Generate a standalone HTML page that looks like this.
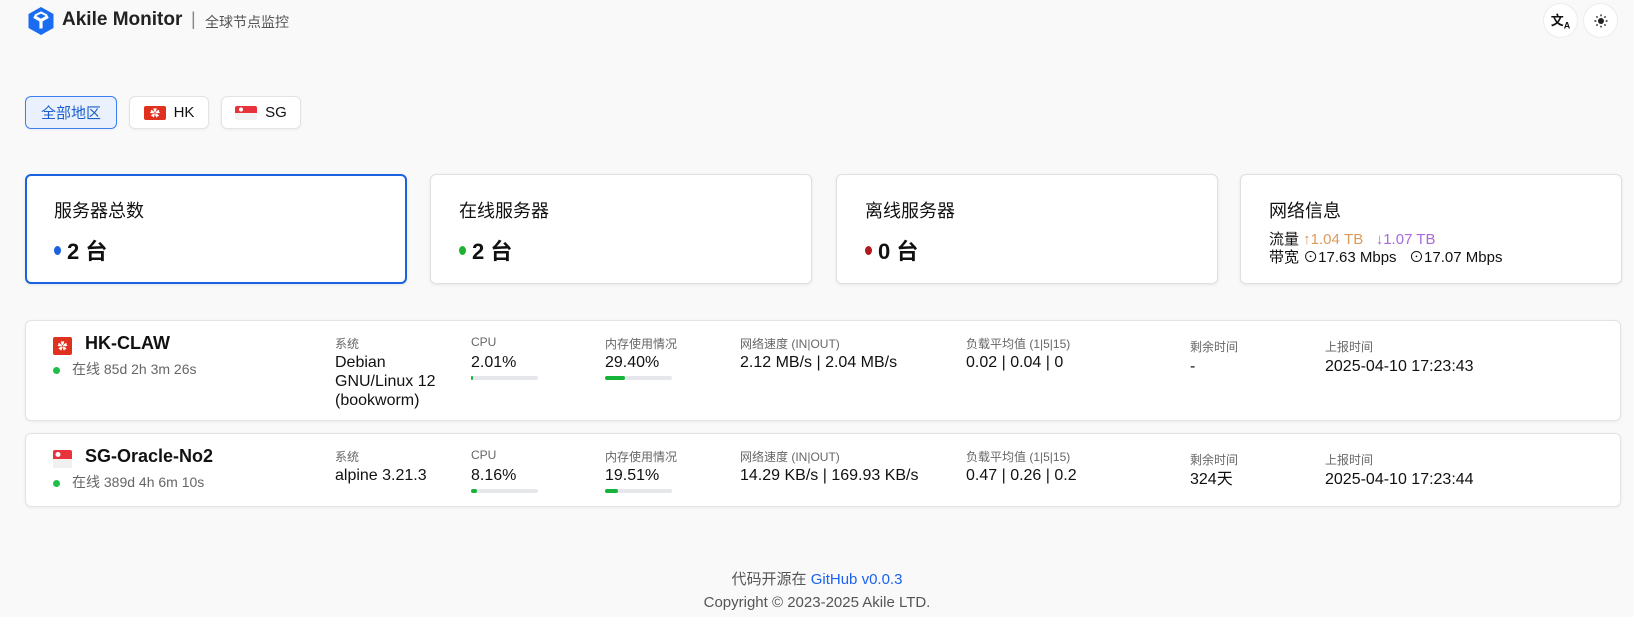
<!DOCTYPE html>
<html><head><meta charset="utf-8"><style>
*{margin:0;padding:0;box-sizing:border-box}
body{width:1634px;height:617px;background:#f9f9f9;font-family:"Liberation Sans","Noto Sans CJK SC",sans-serif;color:#111;position:relative;overflow:hidden}
.a{position:absolute;white-space:nowrap}
.btn{position:absolute;top:96px;height:33px;background:#fff;border:1px solid #e3e3e3;border-radius:6px;font-size:15px;display:flex;align-items:center;justify-content:center;gap:8px;box-shadow:0 1px 2px rgba(0,0,0,.05)}
.card{position:absolute;top:174px;height:110px;width:382px;background:#fff;border:1px solid #e0e0e0;border-radius:6px;box-shadow:0 1px 3px rgba(0,0,0,.08)}
.card .t{position:absolute;left:28px;top:22px;font-size:18px}
.card .v{position:absolute;left:28px;top:59px;font-size:22px;font-weight:bold;display:flex;align-items:center;gap:6px}
.dot{width:7px;height:9px;border-radius:50%;display:inline-block}
.row{position:absolute;left:25px;width:1596px;background:#fff;border:1px solid #e3e3e3;border-radius:6px;box-shadow:0 1px 3px rgba(0,0,0,.06)}
.lb{position:absolute;font-size:12px;color:#666}
.vl{position:absolute;font-size:16px;line-height:19px}
.bar{position:absolute;width:67px;height:4px;background:#e5e7eb;border-radius:2px}
.bar i{display:block;height:4px;background:#16b33a;border-radius:2px}
.circ{position:absolute;top:3px;width:35px;height:35px;border-radius:50%;background:#fff;border:1px solid #ececec;display:flex;align-items:center;justify-content:center}
</style></head><body>
<svg class="a" style="left:27px;top:6px" width="28" height="30" viewBox="0 0 28 30"><path d="M14 1 L26.5 8 V22 L14 29 L1.5 22 V8 Z" fill="#1a6cf0"/><path d="M7 10.5 L14 14.5 L21 10.5 M14 14.5 V22.5" stroke="#fff" stroke-width="3.2" fill="none" stroke-linejoin="round"/><path d="M8 9.5 L14 6.5 L20 9.5" stroke="#fff" stroke-width="2" fill="none"/></svg>
<div class="a" style="left:62px;top:9px;font-size:19px;font-weight:bold;color:#222">Akile Monitor</div>
<div class="a" style="left:191px;top:9px;font-size:18px;color:#888">|</div>
<div class="a" style="left:205px;top:12px;font-size:14px;color:#555">全球节点监控</div>
<div class="circ" style="left:1543px"><span style="font-size:13px;font-weight:bold">文<sub style="font-size:9px">A</sub></span></div>
<div class="circ" style="left:1583px"><svg width="14" height="14" viewBox="0 0 14 14"><circle cx="7" cy="7" r="3" fill="#222"/><g stroke="#222" stroke-width="1.4"><path d="M7 0.5v1.8M7 11.7v1.8M0.5 7h1.8M11.7 7h1.8M2.4 2.4l1.2 1.2M10.4 10.4l1.2 1.2M2.4 11.6l1.2-1.2M10.4 3.6l1.2-1.2"/></g></svg></div>

<div class="btn" style="left:25px;width:92px;background:#eaf1fc;border-color:#3b7ff0;color:#1a5fd0">全部地区</div>
<div class="btn" style="left:129px;width:80px"><svg width="22" height="14"><rect width="22" height="14" rx="2" fill="#e0301e"/><text x="11" y="11" fill="#fff" font-size="10" text-anchor="middle">✿</text></svg>HK</div>
<div class="btn" style="left:221px;width:80px"><svg width="22" height="14"><rect width="22" height="14" rx="2" fill="#f2f2f2"/><path d="M2 0h18a2 2 0 0 1 2 2v5H0V2a2 2 0 0 1 2-2z" fill="#e8323c"/><circle cx="6" cy="3.5" r="2" fill="#fff"/></svg>SG</div>

<div class="card" style="left:25px;border:2px solid #1a62e0"><div class="t" style="left:27px;top:21px">服务器总数</div><div class="v" style="left:27px;top:58px"><span class="dot" style="background:#1a62e0"></span>2 台</div></div>
<div class="card" style="left:430px"><div class="t">在线服务器</div><div class="v"><span class="dot" style="background:#1fb030"></span>2 台</div></div>
<div class="card" style="left:836px"><div class="t">离线服务器</div><div class="v"><span class="dot" style="background:#b01a1a"></span>0 台</div></div>
<div class="card" style="left:1240px"><div class="t">网络信息</div>
<div class="a" style="left:28px;top:56px;font-size:15px;line-height:18px">流量 <span style="color:#d99a5c">↑1.04 TB</span> &nbsp; <span style="color:#a86ad8">↓1.07 TB</span><br>带宽 ⊙17.63 Mbps &nbsp; ⊙17.07 Mbps</div></div>

<div class="row" style="top:320px;height:101px">
<svg class="a" style="left:27px;top:16px" width="19" height="18"><rect width="19" height="18" rx="2" fill="#e0301e"/><text x="9.5" y="13" fill="#fff" font-size="10" text-anchor="middle">✿</text></svg>
<div class="a" style="left:59px;top:12px;font-size:18px;font-weight:bold">HK-CLAW</div>
<div class="a" style="left:27px;top:38px;font-size:14px;color:#666"><span class="dot" style="background:#1fbf4a;width:7px;height:7px;margin-right:12px"></span>在线 85d 2h 3m 26s</div>
<div class="lb" style="left:309px;top:14px">系统</div><div class="vl" style="left:309px;top:32px">Debian<br>GNU/Linux 12<br>(bookworm)</div>
<div class="lb" style="left:445px;top:14px">CPU</div><div class="vl" style="left:445px;top:32px">2.01%</div><div class="bar" style="left:445px;top:55px"><i style="width:2px"></i></div>
<div class="lb" style="left:579px;top:14px">内存使用情况</div><div class="vl" style="left:579px;top:32px">29.40%</div><div class="bar" style="left:579px;top:55px"><i style="width:20px"></i></div>
<div class="lb" style="left:714px;top:14px">网络速度 (IN|OUT)</div><div class="vl" style="left:714px;top:32px">2.12 MB/s | 2.04 MB/s</div>
<div class="lb" style="left:940px;top:14px">负载平均值 (1|5|15)</div><div class="vl" style="left:940px;top:32px">0.02 | 0.04 | 0</div>
<div class="lb" style="left:1164px;top:17px">剩余时间</div><div class="vl" style="left:1164px;top:36px">-</div>
<div class="lb" style="left:1299px;top:17px">上报时间</div><div class="vl" style="left:1299px;top:36px">2025-04-10 17:23:43</div>
</div>

<div class="row" style="top:433px;height:74px">
<svg class="a" style="left:27px;top:16px" width="19" height="18"><rect width="19" height="18" rx="2" fill="#f0f0f0"/><path d="M2 0h15a2 2 0 0 1 2 2v7H0V2a2 2 0 0 1 2-2z" fill="#e8323c"/><circle cx="5" cy="4.5" r="2.5" fill="#fff"/></svg>
<div class="a" style="left:59px;top:12px;font-size:18px;font-weight:bold">SG-Oracle-No2</div>
<div class="a" style="left:27px;top:38px;font-size:14px;color:#666"><span class="dot" style="background:#1fbf4a;width:7px;height:7px;margin-right:12px"></span>在线 389d 4h 6m 10s</div>
<div class="lb" style="left:309px;top:14px">系统</div><div class="vl" style="left:309px;top:32px">alpine 3.21.3</div>
<div class="lb" style="left:445px;top:14px">CPU</div><div class="vl" style="left:445px;top:32px">8.16%</div><div class="bar" style="left:445px;top:55px"><i style="width:6px"></i></div>
<div class="lb" style="left:579px;top:14px">内存使用情况</div><div class="vl" style="left:579px;top:32px">19.51%</div><div class="bar" style="left:579px;top:55px"><i style="width:13px"></i></div>
<div class="lb" style="left:714px;top:14px">网络速度 (IN|OUT)</div><div class="vl" style="left:714px;top:32px">14.29 KB/s | 169.93 KB/s</div>
<div class="lb" style="left:940px;top:14px">负载平均值 (1|5|15)</div><div class="vl" style="left:940px;top:32px">0.47 | 0.26 | 0.2</div>
<div class="lb" style="left:1164px;top:17px">剩余时间</div><div class="vl" style="left:1164px;top:36px">324天</div>
<div class="lb" style="left:1299px;top:17px">上报时间</div><div class="vl" style="left:1299px;top:36px">2025-04-10 17:23:44</div>
</div>

<div class="a" style="left:0;width:1634px;top:568px;text-align:center;font-size:15px;color:#555">代码开源在 <span style="color:#1a62f0">GitHub v0.0.3</span></div>
<div class="a" style="left:0;width:1634px;top:594px;text-align:center;font-size:15px;color:#555">Copyright © 2023-2025 Akile LTD.</div>
</body></html>
